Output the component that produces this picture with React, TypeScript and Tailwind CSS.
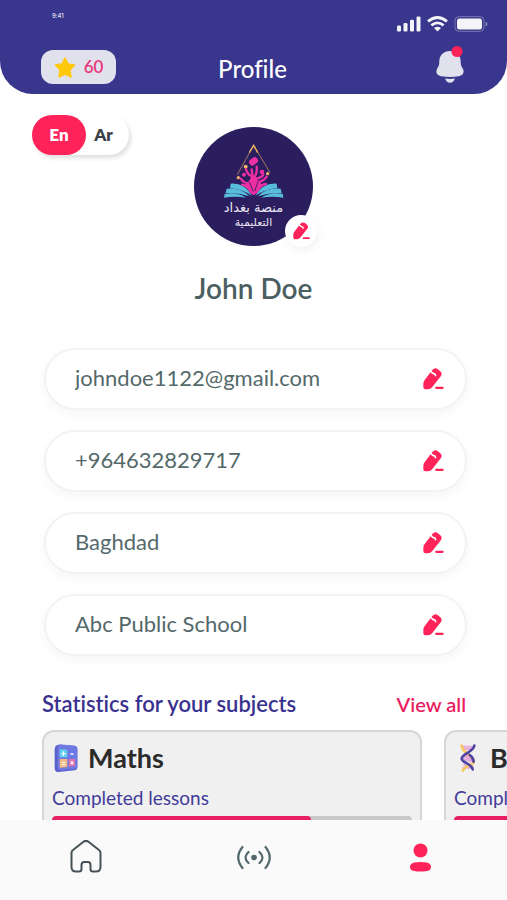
import { useState } from "react";

function PencilIcon({ className }: { className: string }) {
  return (
    <svg viewBox="0 0 62 64" className={className} aria-hidden="true">
      <path
        d="M1 46Q1 40 5 35L27 6Q35-3 44 3L51 9Q58 15 53 23L27 56Q22 62 14 62H7Q1 62 1 56Z"
        fill="#ff2359"
      />
      <path d="M22 9L30 16Q36 15 37 22" fill="none" stroke="#fff" strokeWidth="5" strokeLinecap="round" />
      <path d="M39 58H58" stroke="#ff2359" strokeWidth="6.5" strokeLinecap="round" />
    </svg>
  );
}

function StatusIcons() {
  return (
    <svg viewBox="0 0 91 16" className="h-4 w-[91px]" fill="#f4f4f8" aria-hidden="true">
      <rect x="0" y="9.5" width="4" height="6" rx="1.2" />
      <rect x="6.500" y="7" width="4" height="8.500" rx="1.2" />
      <rect x="13" y="3.800" width="4" height="11.700" rx="1.2" />
      <rect x="19.500" y="0.500" width="4" height="15" rx="1.2" />
      <g fill="none" stroke="#f4f4f8" strokeWidth="2.800">
        <path d="M31 5.400Q40.500-2.400 50 5.400" />
        <path d="M34.400 9.400Q40.500 4.400 46.600 9.400" />
      </g>
      <path d="M37 12Q40.500 9.600 44 12L40.500 15.400Z" />
      <rect x="58" y="0.700" width="29" height="14.600" rx="4" fill="none" stroke="#f4f4f8" strokeOpacity="0.35" />
      <rect x="60" y="2.600" width="25" height="10.800" rx="2.500" />
      <path d="M88.500 5.500Q90.500 6 90.500 8T88.500 10.500Z" fillOpacity="0.4" />
    </svg>
  );
}

function BellIcon() {
  return (
    <svg viewBox="0 0 28 38" className="h-[38px] w-7 overflow-visible" aria-hidden="true">
      <path
        d="M14 3C7.500 3 3.300 7.500 3.300 13.500C3.300 17.500 2.500 18.500 1 21C-0.800 25 1.500 27.500 5 28.200Q14 29.800 23 28.200C26.500 27.500 28.800 25 27 21C25.500 18.500 24.700 17.500 24.700 13.500C24.700 7.500 20.500 3 14 3Z"
        fill="#e0e1ec"
      />
      <path d="M9 30.500Q14 31.300 19 30.500Q17.500 34.700 14 34.700T9 30.500Z" fill="#e0e1ec" />
      <circle cx="21" cy="3.500" r="5.500" fill="#ff2359" />
    </svg>
  );
}

function LogoMark() {
  return (
    <svg viewBox="0 0 180 165" className="h-[55px] w-[60px]" aria-hidden="true">
      <path d="M40 92L89 4L138 86" fill="none" stroke="#b98a62" strokeWidth="2.500" />
      <path d="M76 26L89 4L101 26" fill="none" stroke="#f0b45c" strokeWidth="4" />
      <circle cx="65" cy="68" r="6" fill="#f3b267" />
      <circle cx="43" cy="101" r="5" fill="#f3b267" />
      <circle cx="131" cy="89" r="5" fill="#f3b267" />
      <g fill="#ee2fa4">
        <rect x="75" y="43" width="27" height="19" rx="7" transform="rotate(-38 88 52)" />
        <circle cx="60" cy="92" r="6" />
        <circle cx="114" cy="84" r="7" />
        <path d="M62 122Q74 116 82 98H96Q104 116 116 122L103 144L89 154L76 144Z" />
      </g>
      <g fill="none" stroke="#ee2fa4" strokeWidth="7" strokeLinecap="round">
        <path d="M66 76Q72 94 86 98L83 76M92 98Q100 88 98 68M50 104Q60 118 74 118M128 98Q118 112 104 114M96 104Q112 102 118 92M54 122Q72 124 84 146M126 120Q108 122 96 144" />
      </g>
      <path d="M76 114L88 142M102 112L92 142" stroke="#2b1e5e" strokeWidth="2.500" />
      <g fill="#58bddb">
        <path d="M20 119Q62 116 84 156Q58 136 18 133Z" />
        <path d="M8 134Q52 130 76 157Q44 146 5 147Z" />
        <path d="M2 149Q42 143 66 161Q34 155 0 161Z" />
        <path d="M158 119Q116 116 94 156Q120 136 160 133Z" />
        <path d="M170 134Q126 130 102 157Q134 146 173 147Z" />
        <path d="M176 149Q136 143 112 161Q144 155 178 161Z" />
      </g>
    </svg>
  );
}

function CalculatorIcon() {
  return (
    <svg viewBox="0 0 72 84" className="h-7 w-6" aria-hidden="true">
      <path d="M14 2L60 5Q70 6 70 16V70Q70 78 62 79L14 84Q3 84 2 74V14Q4 2 14 2Z" fill="#5961cd" />
      <path d="M18 1L61 5Q70 6 70 16V66Q70 74 62 75L20 79Q11 79 11 70V10Q11 2 18 1Z" fill="#7079e0" />
      <path d="M18 15L40 17V40H17V18Z" fill="#5fcdf0" />
      <path d="M45 17L63 19V40H45Z" fill="#6978e8" />
      <path d="M17 45H40V69L19 71L17 68Z" fill="#f5b67f" />
      <path d="M45 45H63V66L45 68Z" fill="#e070b0" />
      <g stroke="#fff" strokeWidth="4" strokeOpacity="0.9">
        <path d="M22 29H35M28.500 22V36M49 30H59M23 55H34M23 62H34M50 52L58 61M58 52L50 61" />
      </g>
    </svg>
  );
}

function DnaIcon() {
  return (
    <svg viewBox="0 0 48 84" className="h-7 w-4" fill="none" strokeLinecap="round" aria-hidden="true">
      <path d="M9 8H38M12 15H34M14 31L34 42M11 37L36 48M9 44L35 53M13 64H36M10 71H39" stroke="#e6a9dc" strokeWidth="6" />
      <path d="M5 5C7 30 41 31 41 53C41 66 15 63 8 80" stroke="#f7c85f" strokeWidth="8" />
      <path d="M43 5C40 25 5 29 5 44C6 57 35 58 38 76" stroke="#4d43a1" strokeWidth="8" />
      <path d="M29 33Q40 40 41 53" stroke="#4d43a1" strokeWidth="8" />
    </svg>
  );
}

const profileFields = [
  { label: "Email", type: "email", value: "johndoe1122@gmail.com" },
  { label: "Phone", type: "tel", value: "+964632829717" },
  { label: "City", type: "text", value: "Baghdad" },
  { label: "School", type: "text", value: "Abc Public School" },
];

function ProfileField({ label, type, value }: { label: string; type: string; value: string }) {
  return (
    <div className="flex h-[62px] items-center rounded-full border-2 border-[#f3f3f3] bg-white pr-[21px] pl-[25px] shadow-[0_4px_12px_rgba(0,0,0,0.04)]">
      <input
        type={type}
        aria-label={label}
        defaultValue={value}
        className="min-w-0 flex-1 bg-transparent px-1 pb-1 text-[22px] text-[#53696a] outline-none"
      />
      <button type="button" aria-label={`Edit ${label}`}>
        <PencilIcon className="h-[22px] w-[21px]" />
      </button>
    </div>
  );
}

const subjects = [
  { name: "Maths", Icon: CalculatorIcon, progress: 72 },
  { name: "Biology", Icon: DnaIcon, progress: 60 },
];

function SubjectCard({ name, Icon, progress }: (typeof subjects)[number]) {
  return (
    <article className="h-40 w-[380px] shrink-0 rounded-xl border-2 border-[#d6d6d6] bg-[#f0f0f0] px-2 pt-2">
      <div className="flex h-9 items-center gap-2">
        <span className="flex w-7 justify-center">
          <Icon />
        </span>
        <h3 className="text-[27px] font-bold text-[#2b2b2b]">{name}</h3>
      </div>
      <p className="mt-2 text-[19px] leading-7 text-[#433b9a]">Completed lessons</p>
      <div className="mt-1 h-2 overflow-hidden rounded-full bg-[#c8c8c8]">
        <div className="h-full rounded-full bg-[#e91e63]" style={{ width: `${progress}%` }} />
      </div>
    </article>
  );
}

export default function App() {
  const [lang, setLang] = useState("En");
  return (
    <div className="flex h-screen flex-col overflow-hidden bg-white font-[Lato,sans-serif] [font-variant-ligatures:none]">
      <header className="rounded-b-[33px] bg-[#38368d] pb-[10px]">
        <div className="flex h-12 items-center justify-between pr-[19px] pl-[52px]">
          <span className="mt-[11px] self-start font-[Inter,sans-serif] text-[6px] leading-[9px] text-white">9:41</span>
          <StatusIcons />
        </div>
        <div className="grid h-9 grid-cols-[1fr_auto_1fr] items-center pr-[43px] pl-[41px]">
          <div className="flex h-[34px] w-[75px] items-center justify-center gap-2 rounded-xl bg-[#e0e1ec]">
            <svg viewBox="0 0 22 21" className="h-[21px] w-[22px]" aria-hidden="true">
              <path
                d="M11 1L14 7L20.500 8L16 13L17 20L11 17L5 20L6 13L1.500 8L8 7Z"
                fill="#ffc80a"
                stroke="#ffc80a"
                strokeWidth="1.500"
                strokeLinejoin="round"
              />
            </svg>
            <span className="text-[17px] font-semibold text-[#e8377a]">60</span>
          </div>
          <h1 className="pt-1 text-2xl font-medium text-white">Profile</h1>
          <button type="button" aria-label="Notifications" className="justify-self-end">
            <BellIcon />
          </button>
        </div>
      </header>

      <main className="min-h-0 flex-1 overflow-hidden pt-[21px]">
        <section className="grid grid-cols-[1fr_auto_1fr] items-start px-8">
          <div className="flex h-10 w-[97px] rounded-full bg-white text-[17px] font-extrabold shadow-[2px_3px_4px_rgba(0,0,0,0.13)]">
            <button
              type="button"
              aria-pressed={lang === "En"}
              onClick={() => setLang("En")}
              className="w-[54px] rounded-full bg-[#ff2359] text-white"
            >
              En
            </button>
            <button
              type="button"
              aria-pressed={lang === "Ar"}
              onClick={() => setLang("Ar")}
              className="flex-1 pr-2 text-[#3c4246]"
            >
              Ar
            </button>
          </div>
          <div className="relative mt-3 flex size-[119px] flex-col items-center rounded-full bg-[#2b1e5e] pt-[17px] text-[#e8e4f2]">
            <LogoMark />
            <span lang="ar" dir="rtl" className="font-['DejaVu_Sans',sans-serif] text-[13px] leading-[18px]">
              منصة بغداد
            </span>
            <span lang="ar" dir="rtl" className="font-['DejaVu_Sans',sans-serif] text-[11px] leading-3">
              التعليمية
            </span>
            <button
              type="button"
              aria-label="Edit picture"
              className="absolute -right-1 -bottom-[1px] flex size-8 items-center justify-center rounded-full bg-white shadow-[2px_4px_8px_rgba(0,0,0,0.05)]"
            >
              <PencilIcon className="h-[18px] w-[17px]" />
            </button>
          </div>
        </section>

        <h2 className="mt-6 text-center text-[28px] leading-9 font-semibold text-[#4b5f62]">John Doe</h2>

        <form className="mt-[42px] flex flex-col gap-5 pr-10 pl-11">
          {profileFields.map((field) => (
            <ProfileField key={field.label} {...field} />
          ))}
        </form>

        <section className="mt-[34px] pl-[42px]">
          <div className="flex items-center justify-between pr-[41px]">
            <h2 className="text-[22px] leading-7 font-semibold text-[#38318f]">Statistics for your subjects</h2>
            <a href="#subjects" className="text-[20px] leading-7 font-semibold text-[#e91e63]">
              View all
            </a>
          </div>
          <div id="subjects" className="mt-3 flex gap-[22px] overflow-hidden">
            {subjects.map((subject) => (
              <SubjectCard key={subject.name} {...subject} />
            ))}
          </div>
        </section>
      </main>

      <nav className="flex h-20 justify-between bg-[#fafafa] px-[70px] pt-5">
        <a href="#home" aria-label="Home" className="h-8">
          <svg viewBox="0 0 32 34" className="h-[34px] w-8" fill="none" stroke="#465155" strokeWidth="2" strokeLinejoin="round" aria-hidden="true">
            <path d="M1.500 13Q1.500 11 3 10L13.500 1.800Q16 0 18.500 1.800L29 10Q30.500 11 30.500 13V27Q30.500 31.500 26 31.500H23Q20.500 31.500 20.500 29V25Q20.500 22 18 22H14.500Q11.500 22 11.500 25V29Q11.500 31.500 9 31.500H6Q1.500 31.500 1.500 27Z" />
          </svg>
        </a>
        <a href="#live" aria-label="Live" className="h-8">
          <svg viewBox="0 0 36 34" className="h-[34px] w-9" fill="none" stroke="#52686a" strokeWidth="2.200" strokeLinecap="round" aria-hidden="true">
            <circle cx="18" cy="17.500" r="2.800" fill="#52686a" stroke="none" />
            <path d="M6.500 7Q-2 17.500 6.500 28M29.500 7Q38 17.500 29.500 28M12.500 12Q6.500 17.500 12.500 23M23.500 12Q29.500 17.500 23.500 23" />
          </svg>
        </a>
        <a href="#profile" aria-label="Profile" className="h-8">
          <svg viewBox="0 0 32 34" className="h-[34px] w-8" fill="#ff2359" aria-hidden="true">
            <circle cx="15.500" cy="10.500" r="7" />
            <path d="M9 22.500Q15.500 21.500 22 22.500Q26 23.500 26 27T22 31Q15.500 32.200 9 31Q5 30.500 5 27T9 22.500Z" />
          </svg>
        </a>
      </nav>
    </div>
  );
}
